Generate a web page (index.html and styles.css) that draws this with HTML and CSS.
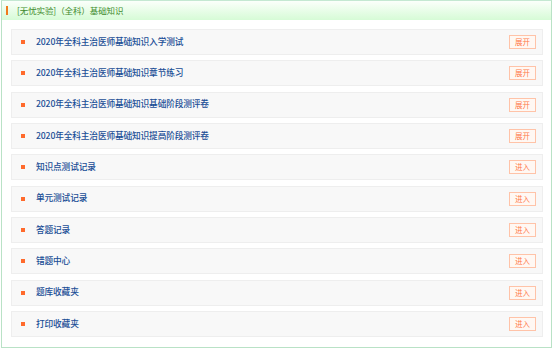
FILE: index.html
```html
<!DOCTYPE html>
<html lang="zh">
<head>
<meta charset="utf-8">
<link rel="stylesheet" href="styles.css">
</head>
<body>
<div class="panel">
  <div class="panel-head"><span class="mark"></span><span class="title">[无忧实验]（全科）基础知识</span></div>
  <div class="list">
    <div class="row"><span class="dot"></span><span class="label">2020年全科主治医师基础知识入学测试</span><span class="btn">展开</span></div>
    <div class="row"><span class="dot"></span><span class="label">2020年全科主治医师基础知识章节练习</span><span class="btn">展开</span></div>
    <div class="row"><span class="dot"></span><span class="label">2020年全科主治医师基础知识基础阶段测评卷</span><span class="btn">展开</span></div>
    <div class="row"><span class="dot"></span><span class="label">2020年全科主治医师基础知识提高阶段测评卷</span><span class="btn">展开</span></div>
    <div class="row"><span class="dot"></span><span class="label">知识点测试记录</span><span class="btn">进入</span></div>
    <div class="row"><span class="dot"></span><span class="label">单元测试记录</span><span class="btn">进入</span></div>
    <div class="row"><span class="dot"></span><span class="label">答题记录</span><span class="btn">进入</span></div>
    <div class="row"><span class="dot"></span><span class="label">错题中心</span><span class="btn">进入</span></div>
    <div class="row"><span class="dot"></span><span class="label">题库收藏夹</span><span class="btn">进入</span></div>
    <div class="row"><span class="dot"></span><span class="label">打印收藏夹</span><span class="btn">进入</span></div>
  </div>
</div>
</body>
</html>
```
FILE: styles.css
```css
html, body { margin: 0; padding: 0; background: #fff; }
body { font-family: "Noto Sans CJK SC", "Liberation Sans", sans-serif; }
.panel {
  margin-left: 1px;
  width: 549px;
  height: 346px;
  border: 1px solid #b9e2c6;
  border-top-color: #c4e8d2;
  background: #fff;
}
.panel-head {
  height: 19px;
  display: flex;
  align-items: center;
  background: linear-gradient(#fbfffb, #d6fbd6);
  padding-left: 4px;
}
.mark { width: 2px; height: 9px; background: #f07a1c; margin-right: 9px; }
.title { color: #3e8b2c; font-size: 8.5px; line-height: 1; letter-spacing: -0.1px; }
.list {
  padding: 9px 8px 0 9px;
  display: flex;
  flex-direction: column;
  gap: 5.33px;
}
.row {
  height: 24px;
  border: 1px solid #eeeeee;
  background: #f8f8f8;
  display: flex;
  align-items: center;
  padding: 0 6px 0 9px;
}
.dot { width: 4px; height: 4px; background: #ff6a2c; margin-right: 11px; flex: none; }
.label { flex: 1; color: #1a4e96; font-size: 8.7px; font-weight: 500; line-height: 1; letter-spacing: -0.15px; }
.btn {
  width: 25px;
  height: 12px;
  border: 1px solid #ffc3a8;
  background: #fff8f3;
  color: #ff7a4a;
  font-size: 7.5px;
  line-height: 12px;
  text-align: center;
  flex: none;
}
```
